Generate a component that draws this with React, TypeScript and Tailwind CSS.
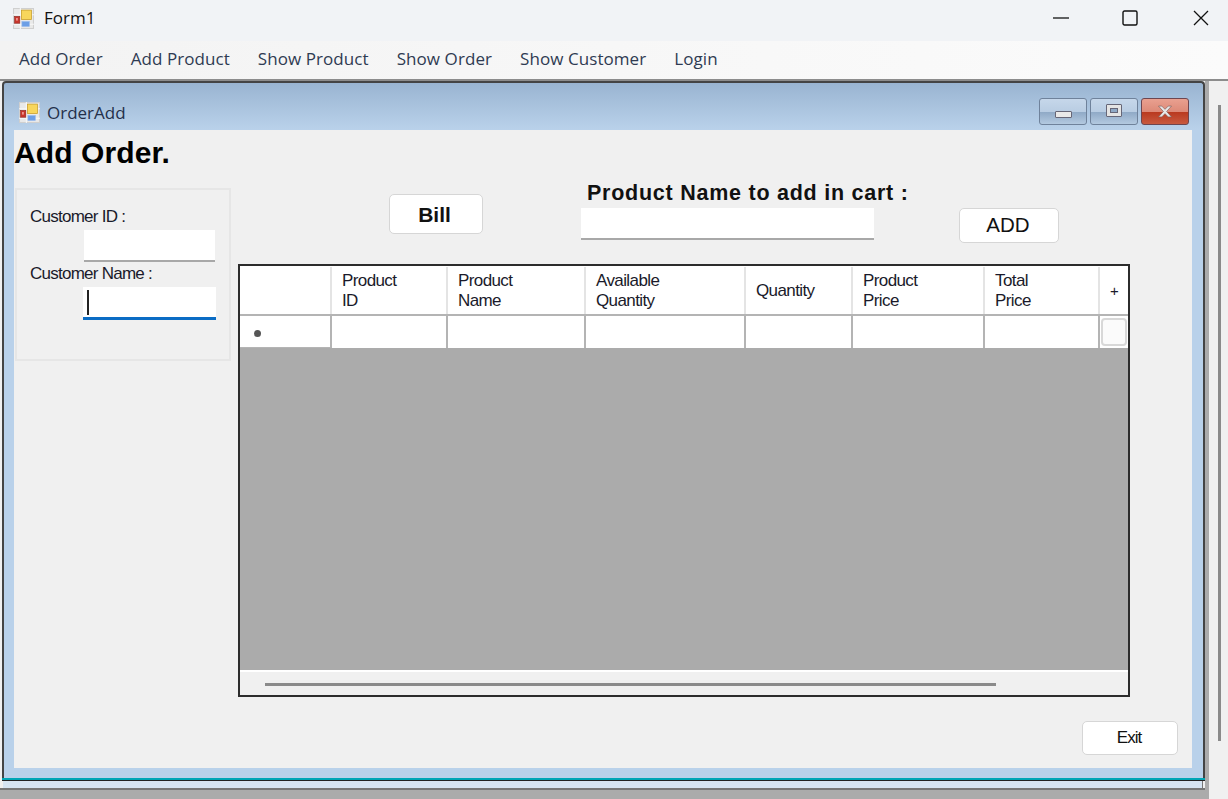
const SANS = "font-['Liberation_Sans',Arial,sans-serif]";

const COLUMNS = [
  { label: ['Product', 'ID'], width: 'w-[116px]' },
  { label: ['Product', 'Name'], width: 'w-[138px]' },
  { label: ['Available', 'Quantity'], width: 'w-[160px]' },
  { label: ['Quantity'], width: 'w-[107px]' },
  { label: ['Product', 'Price'], width: 'w-[132px]' },
  { label: ['Total', 'Price'], width: 'w-[115px]' },
];

const MENU = ['Add Order', 'Add Product', 'Show Product', 'Show Order', 'Show Customer', 'Login'];

function FormIcon({ size = 21 }: { size?: number }) {
  return (
    <svg width={size} height={size} viewBox="0 0 20 20" className="shrink-0">
      <rect x="0.5" y="0.5" width="19" height="19" fill="#e9e9e9" stroke="#cfcfcf" />
      <path d="M0 6.500h20M0 15.500h20M7 0v20" stroke="#f8f8f8" strokeWidth="1" />
      <rect x="1.500" y="8" width="5" height="6.500" fill="#c8352b" stroke="#8d2a22" strokeWidth="0.6" />
      <rect x="3" y="9.500" width="1.500" height="2.500" fill="#f1a79f" />
      <rect x="8" y="2" width="9.500" height="9" fill="#f8d65c" stroke="#c89b22" strokeWidth="0.7" />
      <rect x="8.500" y="13" width="7" height="4.500" fill="#6d9fe6" stroke="#8db4ec" strokeWidth="0.6" />
    </svg>
  );
}

function ActionButton({ label, className }: { label: string; className: string }) {
  return (
    <button
      type="button"
      className={`flex items-center justify-center rounded-[5px] border border-[#d6d6d6] bg-white text-[#111] ${className}`}
    >
      {label}
    </button>
  );
}

function CaptionButton({ kind }: { kind: 'min' | 'max' | 'close' }) {
  if (kind === 'close') {
    return (
      <div className="flex h-[27px] w-[48px] items-center justify-center rounded-[3px] border border-[#6e4650] bg-[linear-gradient(#e9a090_0%,#dd8a78_50%,#b9391f_52%,#c85a40_100%)]">
        <svg width="18" height="13" viewBox="0 0 16 12">
          <path d="M2 1h3l3 3 3-3h3l-4.500 5 4.500 5h-3l-3-3-3 3H2l4.500-5z" fill="#e8e8e8" stroke="#7b5a55" strokeWidth="0.6" />
        </svg>
      </div>
    );
  }
  return (
    <div className="flex h-[27px] w-[48px] items-center justify-center rounded-[3px] border border-[#6f829b] bg-[linear-gradient(#c6d7ea_0%,#b9cde3_50%,#8fa9c6_52%,#b3c9e0_100%)]">
      {kind === 'min' ? (
        <div className="mt-[5px] h-[7px] w-[17px] rounded-[1px] border border-[#667] bg-[#e9e9e9]" />
      ) : (
        <div className="mb-[2px] flex h-[13px] w-[16px] items-center justify-center rounded-[1px] border border-[#667] bg-[#e4e4e4]">
          <div className="h-[5px] w-[8px] border border-[#667] bg-[#8fa9c6]" />
        </div>
      )}
    </div>
  );
}

function OrderGrid() {
  return (
    <div className={`flex h-[433px] w-[892px] flex-col border-2 border-[#2c2c2c] bg-[#ababab] text-[17px] leading-[20px] tracking-[-0.6px] text-[#1a1a2a] ${SANS}`}>
      <div className="flex h-[50px] border-b-2 border-[#b4b4b4] bg-white pt-px">
        <div className="w-[92px] border-r-2 border-[#e4e4e4]" />
        {COLUMNS.map((col) => (
          <div key={col.label.join(' ')} className={`flex flex-col justify-center border-r-2 border-[#e4e4e4] pl-[10px] ${col.width}`}>
            {col.label.map((line) => (
              <span key={line}>{line}</span>
            ))}
          </div>
        ))}
        <div className="flex flex-1 items-center justify-center text-[15px]">+</div>
      </div>
      <div className="flex h-[32px]">
        <div className="flex w-[92px] items-center border-r-2 border-b border-[#b4b4b4] bg-white pl-[14px]">
          <div className="mt-[4px] h-[7px] w-[7px] rounded-full bg-[#555]" />
        </div>
        {COLUMNS.map((col) => (
          <div key={col.label.join(' ')} className={`border-r-2 border-[#b4b4b4] bg-white ${col.width}`} />
        ))}
        <div className="flex flex-1 items-center justify-center bg-white">
          <div className="h-[28px] w-[26px] rounded-[4px] border-2 border-[#d8d8d8] bg-[#fbfbfb]" />
        </div>
      </div>
      <div className="flex-1" />
      <div className="flex h-[25px] items-center border-t-2 border-white bg-[#f0f0f0] pl-[25px]">
        <div className="mt-[2px] h-[3px] w-[731px] bg-[#8a8a8a]" />
      </div>
    </div>
  );
}

function OrderForm() {
  return (
    <div className={`flex h-[638px] w-[1178px] flex-col bg-[#f0f0f0] ${SANS}`}>
      <h1 className="h-[52px] pt-[5px] text-[30px] leading-[36px] font-bold tracking-[0.1px] text-black">Add Order.</h1>
      <div className="flex items-start">
        <div className="mt-[6px] ml-px flex h-[173px] w-[216px] flex-col border-2 border-[#e6e6e6] pt-[17px] text-[17px] leading-[20px] tracking-[-0.75px] text-[#1a1a2a]">
          <span className="ml-[13px]">Customer ID :</span>
          <div className="mt-[3px] ml-[67px] h-[32px] w-[131px] border-b-2 border-[#a8a8a8] bg-white" />
          <span className="mt-[2px] ml-[13px]">Customer Name :</span>
          <div className="mt-[3px] ml-[66px] flex h-[33px] w-[133px] items-center border-b-[3px] border-[#0a6cc4] bg-white pl-[4px]">
            <div className="h-[25px] w-[2px] bg-[#222]" />
          </div>
        </div>
        <div className="ml-[7px] flex flex-col">
          <div className="flex h-[82px] items-start">
            <ActionButton label="Bill" className="mt-[12px] ml-[151px] h-[40px] w-[94px] pt-px pr-[3px] text-[21px] font-bold" />
            <div className="ml-[98px] flex w-[330px] flex-col">
              <span className="ml-[6px] h-[26px] text-[21.500px] leading-[22px] font-bold tracking-[0.75px] whitespace-nowrap text-[#111]">Product Name to add in cart :</span>
              <div className="h-[32px] w-[293px] border-b-2 border-[#a8a8a8] bg-white" />
            </div>
            <ActionButton label="ADD" className="mt-[26px] ml-[48px] h-[35px] w-[100px] pr-[2px] text-[20.500px]" />
          </div>
          <OrderGrid />
        </div>
      </div>
      <div className="mt-[24px] flex justify-end pr-[14px]">
        <ActionButton label="Exit" className="h-[34px] w-[96px] pr-[2px] text-[17px] tracking-[-1px]" />
      </div>
    </div>
  );
}

export default function App() {
  return (
    <div className="flex h-[799px] w-[1228px] flex-col overflow-hidden bg-[#f0f0f0] font-['Open_Sans',sans-serif]">
      <div className="flex h-[41px] items-center bg-[#f1f3f6] pb-[5px] pl-[13px]">
        <FormIcon />
        <span className="ml-[10px] text-[17px] text-[#111]">Form1</span>
        <div className="ml-auto flex items-center text-[#111]">
          <svg width="16" height="2" viewBox="0 0 16 2" className="mr-[53px]">
            <path d="M0 1h16" stroke="#111" strokeWidth="1.300" />
          </svg>
          <svg width="16" height="16" viewBox="0 0 16 16" className="mr-[55px]">
            <rect x="1" y="1" width="14" height="14" rx="1.500" fill="none" stroke="#111" strokeWidth="1.400" />
          </svg>
          <svg width="16" height="16" viewBox="0 0 16 16" className="mr-[19px]">
            <path d="M1 1l14 14M15 1L1 15" stroke="#111" strokeWidth="1.300" />
          </svg>
        </div>
      </div>
      <div className="flex h-[38px] items-center gap-[28px] bg-[linear-gradient(90deg,#f3f3f3,#fbfbfb)] pb-[3px] pl-[19px] text-[17px] tracking-[0.07px] text-[#2f3b52]">
        {MENU.map((item) => (
          <span key={item}>{item}</span>
        ))}
      </div>
      <div className="flex flex-1 border-t-2 border-[#8c8c8c] bg-[#f0f0f0]">
        <div className="flex flex-col">
          <div className="ml-[2px] flex w-[1203px] flex-col rounded-t-[4px] border-2 border-b-0 border-[#444] bg-[#b9d1ea] bg-[linear-gradient(#99b4d1_0,#b9d1ea_46px)]">
            <div className="flex h-[47px] items-center pt-[12px] pl-[15px]">
              <FormIcon />
              <span className="ml-[7px] text-[17px] text-[#24304a]">OrderAdd</span>
              <div className="mb-[2px] ml-auto flex gap-[3px] pr-[14px]">
                <CaptionButton kind="min" />
                <CaptionButton kind="max" />
                <CaptionButton kind="close" />
              </div>
            </div>
            <div className="flex pr-[9px] pl-[10px]">
              <OrderForm />
            </div>
            <div className="h-[10px]" />
          </div>
          <div className="ml-[2px] h-[2px] w-[1203px] bg-[#00a5b5]" />
          <div className="ml-[2px] h-px w-[1203px] bg-[#222]" />
          <div className="ml-[3px] h-[7px] w-[1200px] border-r border-[#777] bg-[#d6e4f2]" />
          <div className="h-[2px] bg-[#777]" />
          <div className="flex-1 bg-[#ababab]" />
        </div>
        <div className="flex-1 border-l-[4px] border-[#ababab] pt-[24px] pl-[9px]">
          <div className="h-[636px] w-[3px] bg-[#8a8a8a]" />
        </div>
      </div>
    </div>
  );
}
